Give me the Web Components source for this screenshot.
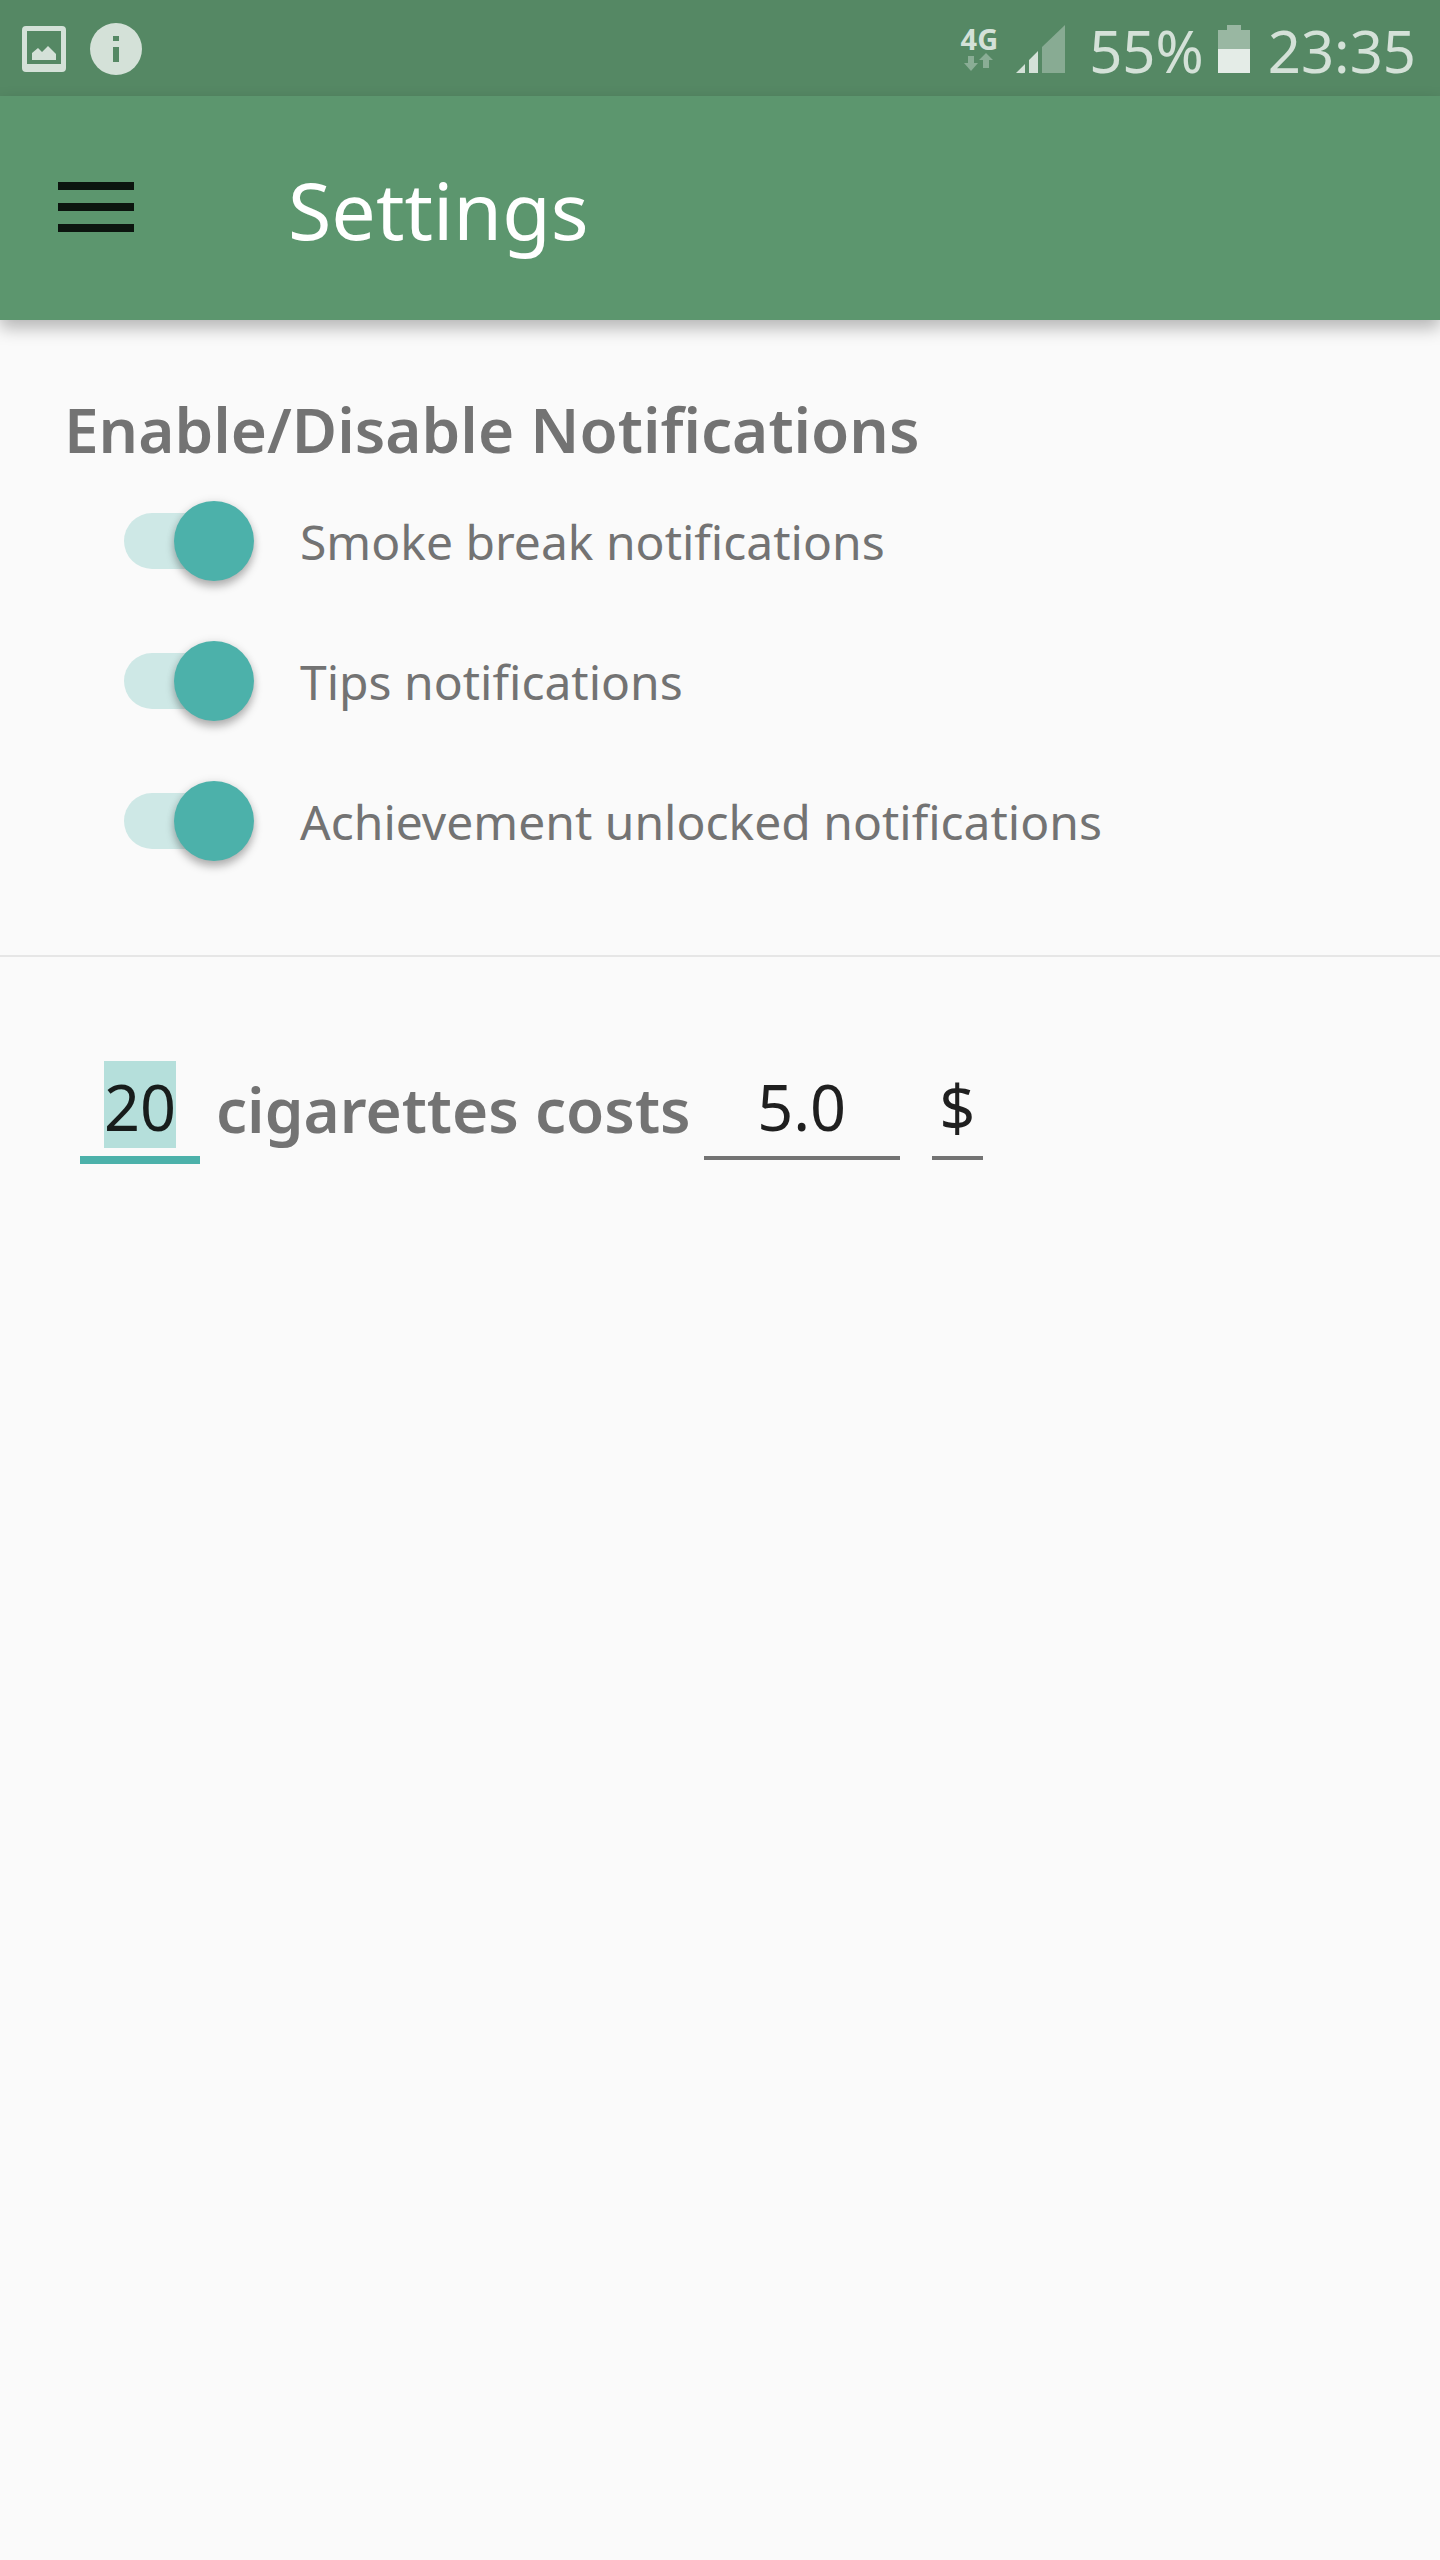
<!DOCTYPE html>
<html lang="en">
<head>
<meta charset="utf-8">
<meta name="viewport" content="width=device-width, initial-scale=1">
<title>Settings</title>
<style>
  html { background: #fafafa; }
  body {
    margin: 0;
    color: #737373;
    font-family: "Noto Sans", "Open Sans", sans-serif;
  }
</style>
</head>
<body>
<settings-screen></settings-screen>

<script>
  class BaseElement extends HTMLElement {
    constructor() {
      super();
      this.attachShadow({ mode: "open" }).innerHTML = this.render();
    }
    render() { return "<slot></slot>"; }
  }

  customElements.define("status-bar", class extends BaseElement {
    render() {
      return `
        <style>
          :host {
            display: flex; align-items: center; justify-content: space-between;
            box-sizing: border-box; height: 96px; padding: 0 24px 0 22px;
            background: #558864; color: #d4e1d8;
          }
          svg { display: block; flex: none; }
          .group { display: flex; align-items: center; }
          .notices { gap: 24px; }
          .network { display: flex; flex-direction: column; align-items: center; margin-right: 18px; }
          .network span { font-size: 29px; line-height: 28px; font-weight: 700; }
          .value { font-size: 58px; line-height: 64px; }
          .percent { margin: 6px 14px 0 24px; }
          .clock { margin: 6px 0 0 18px; }
        </style>
        <div class="group notices">
          <svg width="44" height="52" viewBox="0 0 44 52" aria-label="Screenshot">
            <path fill="currentColor" fill-rule="evenodd" d="M4 4H40a4 4 0 0 1 4 4V46a4 4 0 0 1-4 4H4a4 4 0 0 1-4-4V8a4 4 0 0 1 4-4ZM5 9V42H39V9Z"/>
            <path fill="currentColor" d="M10 38V31L16 26 20 30 26 24 34 32V38Z"/>
          </svg>
          <svg width="52" height="54" viewBox="0 0 52 54" aria-label="Information">
            <circle cx="26" cy="28" r="26" fill="currentColor"/>
            <path fill="#558864" d="M23 15h6v5h-6zM23 26h6v15h-6z"/>
          </svg>
        </div>
        <div class="group">
          <div class="network">
            <span>4G</span>
            <svg width="30" height="18" viewBox="0 0 30 18" fill="#8aad95" aria-hidden="true">
              <path d="M4 3H10V10H14L7 18 0 10H4ZM19 15V7H15L22 0 29 7H25V15Z"/>
            </svg>
          </div>
          <svg width="49" height="50" viewBox="0 0 49 50" fill="currentColor" aria-label="Signal">
            <path d="M0 50 9 41V50ZM13 50V37L22 28V50Z"/>
            <path fill="#88ab93" d="M26 50V24L49 2V50Z"/>
          </svg>
          <span class="value percent">55%</span>
          <svg width="32" height="50" viewBox="0 0 32 50" aria-label="Battery">
            <path fill="#99b7a2" d="M9 2H23V7H32V26H0V7H9Z"/>
            <path fill="#e4ece7" d="M0 26H32V50H0Z"/>
          </svg>
          <span class="value clock">23:35</span>
        </div>`;
    }
  });

  customElements.define("app-bar", class extends BaseElement {
    render() {
      return `
        <style>
          :host {
            display: flex; align-items: center; gap: 154px;
            box-sizing: border-box; height: 224px; padding: 0 38px 2px;
            background: #5c966e; color: #fff;
            box-shadow: 0 8px 16px rgba(0, 0, 0, .28);
          }
          button {
            display: flex; padding: 20px; margin: 0 -20px 0 0;
            border: 0; background: none; color: #0c150f;
          }
          h1 { margin: 0; padding-top: 6px; font-size: 79px; line-height: 104px; font-weight: 400; }
        </style>
        <button type="button" aria-label="Open menu">
          <svg width="76" height="50" viewBox="0 0 76 50" fill="currentColor" aria-hidden="true">
            <path d="M0 0H76V8H0ZM0 21H76V29H0ZM0 42H76V50H0Z"/>
          </svg>
        </button>
        <h1><slot></slot></h1>`;
    }
  });

  customElements.define("toggle-row", class extends BaseElement {
    render() {
      return `
        <style>
          :host { display: block; }
          label { display: flex; align-items: center; gap: 58px; height: 140px; }
          input {
            appearance: none; flex: none;
            display: flex; align-items: center; justify-content: flex-end;
            width: 118px; height: 56px; margin: 0;
            border-radius: 28px; background: #cee8e6;
          }
          input::before {
            content: ""; flex: none; width: 80px; height: 80px;
            margin-right: -12px; border-radius: 50%;
            background: #4cb1aa;
            box-shadow: 0 6px 8px rgba(0, 0, 0, .26), 0 0 8px rgba(0, 0, 0, .1);
          }
          input:not(:checked) { justify-content: flex-start; background: #cfcfcf; }
          input:not(:checked)::before { margin: 0 0 0 -12px; background: #f1f1f1; }
          span { padding-top: 2px; font-size: 48px; line-height: 68px; }
        </style>
        <label><input type="checkbox" role="switch" checked><span><slot></slot></span></label>`;
    }
  });

  customElements.define("line-field", class extends BaseElement {
    render() {
      const name = this.getAttribute("label");
      const value = this.getAttribute("value");
      return `
        <style>
          :host { display: block; width: var(--field-width); height: 103px; }
          label {
            display: flex; justify-content: center; box-sizing: border-box;
            height: 99px; padding-bottom: 8px; border-bottom: 4px solid #737373;
          }
          input {
            box-sizing: border-box; width: 100%; height: 87px; margin: 0; padding: 4px 0 0;
            border: 0; outline: 0; background: none; color: #1f1f1f;
            font-family: inherit; font-size: 63px; line-height: 83px; text-align: center;
          }
          :host([active]) label { height: 103px; border-bottom: 8px solid #4cb1aa; }
          :host([active]) input { width: 72px; background: #b5dfdb; color: #171c1b; }
        </style>
        <label><input type="text" inputmode="decimal" aria-label="${name}" value="${value}"></label>`;
    }
  });

  customElements.define("settings-screen", class extends BaseElement {
    render() {
      return `
        <style>
          :host { display: block; }
          h2, .cost span { margin: 0; font-size: 62px; line-height: 84px; font-weight: 600; }
          .notifications { padding: 67px 60px 64px 64px; border-bottom: 2px solid #e6e6e6; }
          .toggles { padding-left: 60px; }
          .cost { display: flex; align-items: flex-start; padding: 104px 60px 0 80px; }
          .cost span { padding: 6px 13px 0 16px; }
          .quantity { --field-width: 120px; }
          .price { --field-width: 196px; }
          .currency { --field-width: 51px; margin-left: 32px; }
        </style>
        <header>
          <status-bar></status-bar>
          <app-bar>Settings</app-bar>
        </header>
        <main>
          <section class="notifications">
            <h2>Enable/Disable Notifications</h2>
            <div class="toggles">
              <toggle-row>Smoke break notifications</toggle-row>
              <toggle-row>Tips notifications</toggle-row>
              <toggle-row>Achievement unlocked notifications</toggle-row>
            </div>
          </section>
          <section class="cost">
            <line-field class="quantity" active label="Number of cigarettes" value="20"></line-field>
            <span>cigarettes costs</span>
            <line-field class="price" label="Price" value="5.0"></line-field>
            <line-field class="currency" label="Currency" value="$"></line-field>
          </section>
        </main>`;
    }
  });
</script>
</body>
</html>
